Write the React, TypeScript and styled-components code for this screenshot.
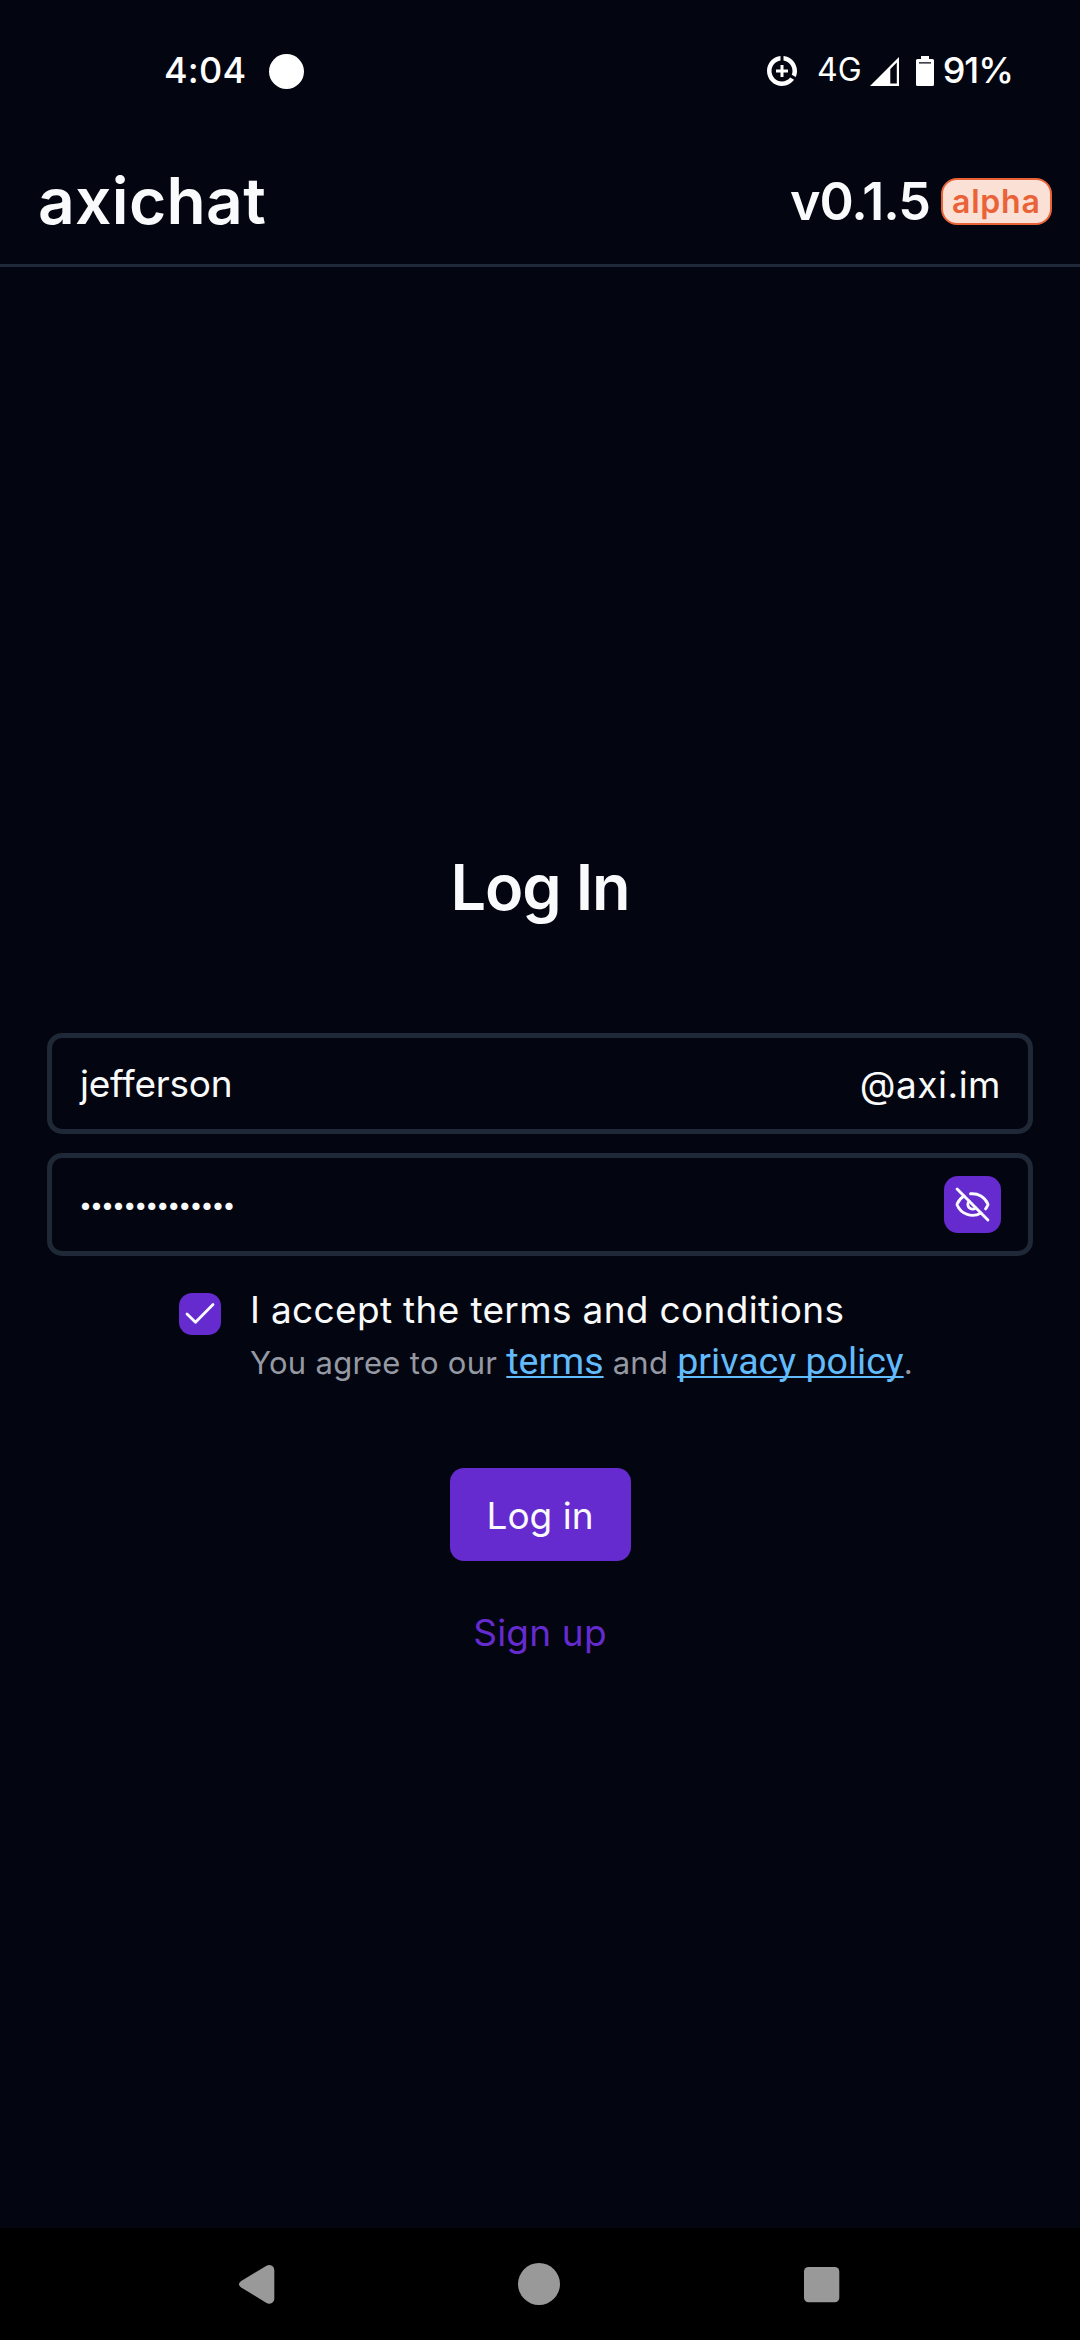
import React from 'react';
import styled, { createGlobalStyle } from 'styled-components';
import { EyeOff } from 'lucide-react';

const color = {
  background: '#030510',
  foreground: '#f9fafb',
  primary: '#652bcf',
  border: '#1f2836',
  muted: '#9599a3',
  link: '#62bbfb',
  alpha: '#ea6237',
  alphaFill: '#fbe0d6',
  nav: '#999999',
};

const GlobalStyle = createGlobalStyle`
  * { box-sizing: border-box; }
  body {
    margin: 0;
    background: ${color.background};
    color: ${color.foreground};
    font-family: Inter, Roboto, sans-serif;
  }
`;

const Screen = styled.div`
  display: flex;
  flex-direction: column;
  width: 1080px;
  height: 2340px;
  background: ${color.background};
`;

const StatusBar = styled.div`
  display: flex;
  justify-content: space-between;
  align-items: center;
  height: 139px;
  padding: 0 67px 0 164px;
  color: #fff;
`;

const StatusGroup = styled.div`
  display: flex;
  align-items: center;

  svg {
    display: block;
    margin-top: 3px;
  }
`;

const Text = styled.span<{ $size: number; $weight?: number; $spacing?: number }>`
  font-size: ${(p) => p.$size}px;
  font-weight: ${(p) => p.$weight ?? 400};
  letter-spacing: ${(p) => p.$spacing ?? 0}px;
  line-height: 44px;
  white-space: nowrap;
`;

const CameraDot = styled.span`
  width: 35px;
  height: 35px;
  margin: 4px 0 0 23px;
  border-radius: 50%;
  background: #fff;
`;

const NetworkLabel = styled(Text)`
  margin: 1px 8px 0 17px;
`;

const Battery = styled.span`
  display: block;
  margin: 0 9px 0 17px;
`;

const AppBar = styled.header`
  display: flex;
  justify-content: space-between;
  align-items: center;
  height: 128px;
  padding: 0 28px 0 38px;
  border-bottom: 3px solid ${color.border};
`;

const Brand = styled(Text)`
  margin-bottom: 2px;
`;

const Version = styled.div`
  display: flex;
  align-items: center;
  gap: 11px;
`;

const Badge = styled.span`
  display: flex;
  align-items: center;
  width: 111px;
  height: 47px;
  padding-left: 9px;
  border: 2px solid ${color.alpha};
  border-radius: 16px;
  background: ${color.alphaFill};
  color: ${color.alpha};
`;

const Main = styled.main`
  flex: 1;
  display: flex;
  flex-direction: column;
  align-items: center;
  padding: 582px 47px 0;
`;

const Title = styled.h1`
  margin: 0 0 108px;
  font-size: 63px;
  font-weight: 600;
  line-height: 76px;
  letter-spacing: -1px;
`;

const Field = styled.div<{ $height: number }>`
  display: flex;
  justify-content: space-between;
  align-items: center;
  width: 986px;
  height: ${(p) => p.$height}px;
  margin-bottom: 19px;
  padding: 0 27px 0 28px;
  border: 5px solid ${color.border};
  border-radius: 15px;
`;

const Domain = styled(Text)`
  margin-top: 2px;
`;

const Password = styled(Text)`
  margin-left: -1px;
`;

const EyeButton = styled.button`
  display: flex;
  align-items: center;
  justify-content: center;
  width: 57px;
  height: 57px;
  padding: 0;
  border: 0;
  border-radius: 14px;
  background: ${color.primary};
  color: ${color.foreground};
`;

const Consent = styled.div`
  display: flex;
  align-self: flex-start;
  gap: 29px;
  margin: 12px 0 0 132px;
`;

const Checkbox = styled.span`
  width: 42px;
  height: 42px;
  margin-top: 6px;
  border-radius: 13px;
  background: ${color.primary};

  svg {
    display: block;
  }
`;

const ConsentText = styled.div`
  display: flex;
  flex-direction: column;
  padding-top: 1px;
`;

const Legal = styled.p`
  margin: 7px 0 0;
  color: ${color.muted};
  font-size: 31px;
  line-height: 48px;
  letter-spacing: 0.3px;
  white-space: nowrap;
`;

const Link = styled.a`
  color: ${color.link};
  font-family: Roboto, sans-serif;
  font-size: 37.6px;
  line-height: 1;
  letter-spacing: 0;
  text-decoration: underline;
  text-decoration-thickness: 2px;
  text-underline-offset: 2px;
  text-decoration-skip-ink: none;
`;

const LoginButton = styled.button`
  display: flex;
  align-items: center;
  justify-content: center;
  width: 181px;
  height: 93px;
  margin-top: 81px;
  padding: 3px 0 0;
  border: 0;
  border-radius: 14px;
  background: ${color.primary};
  color: ${color.foreground};
  font-family: inherit;
`;

const SignUp = styled.a`
  margin-top: 50px;
  color: ${color.primary};
  font-size: 37px;
  line-height: 44px;
  letter-spacing: 0.2px;
`;

const NavBar = styled.nav`
  display: flex;
  align-items: center;
  gap: 222px;
  height: 112px;
  padding-left: 227px;
  background: #000;
  color: ${color.nav};
`;

export default function App() {
  return (
    <>
      <GlobalStyle />
      <Screen>
        <StatusBar>
          <StatusGroup>
            <Text $size={36} $weight={500} $spacing={0.2}>4:04</Text>
            <CameraDot />
          </StatusGroup>
          <StatusGroup>
            <svg width="36" height="36" viewBox="0 0 24 24" fill="currentColor">
              <path d="M11 8v3H8v2h3v3h2v-3h3v-2h-3V8h-2zm2-5.95v3.03c3.39.49 6 3.39 6 6.92 0 .9-.18 1.75-.48 2.54l2.6 1.53c.56-1.24.88-2.62.88-4.07 0-5.18-3.95-9.45-9-9.95zM12 19c-3.87 0-7-3.13-7-7 0-3.53 2.61-6.43 6-6.92V2.05c-5.06.5-9 4.76-9 9.95 0 5.52 4.47 10 9.99 10 3.31 0 6.24-1.61 8.06-4.09l-2.6-1.53C16.17 17.98 14.21 19 12 19z" />
            </svg>
            <NetworkLabel $size={32}>4G</NetworkLabel>
            <svg width="29" height="29" viewBox="0 0 29 29" fill="currentColor" fillRule="evenodd">
              <path d="M0 29L29 0V29ZM20.3 12L26.8 5.5V26.5H20.3Z" />
            </svg>
            <Battery>
              <svg width="18" height="30" viewBox="0 0 18 30" fill="currentColor" fillRule="evenodd">
                <path d="M5 0H13V3H16.5Q18 3 18 4.500V28.500Q18 30 16.500 30H1.500Q0 30 0 28.500V4.500Q0 3 1.500 3H5ZM3 6.200V7.600H15V6.200Z" />
              </svg>
            </Battery>
            <Text $size={36} $weight={500} $spacing={-1}>91%</Text>
          </StatusGroup>
        </StatusBar>

        <AppBar>
          <Brand $size={64} $weight={600} $spacing={0.35}>axichat</Brand>
          <Version>
            <Text $size={52} $weight={600} $spacing={-1}>v0.1.5</Text>
            <Badge>
              <Text $size={32} $weight={600} $spacing={0.8}>alpha</Text>
            </Badge>
          </Version>
        </AppBar>

        <Main>
          <Title>Log In</Title>
          <Field $height={101}>
            <Text $size={37} $spacing={-0.24}>jefferson</Text>
            <Domain $size={37} $spacing={0.5}>@axi.im</Domain>
          </Field>
          <Field $height={103}>
            <Password $size={23} $spacing={-1.9}>••••••••••••••</Password>
            <EyeButton aria-label="Show password">
              <EyeOff size={37} strokeWidth={1.9} />
            </EyeButton>
          </Field>

          <Consent>
            <Checkbox>
              <svg width="42" height="42" viewBox="0 0 42 42" fill="none" stroke={color.foreground} strokeWidth="2.8" strokeLinecap="round" strokeLinejoin="round">
                <path d="M8 21L16.500 29.300L34 11.500" />
              </svg>
            </Checkbox>
            <ConsentText>
              <Text $size={37} $spacing={0.33}>I accept the terms and conditions</Text>
              <Legal>
                You agree to our <Link>terms</Link> and <Link>privacy policy</Link>.
              </Legal>
            </ConsentText>
          </Consent>

          <LoginButton>
            <Text $size={37}>Log in</Text>
          </LoginButton>
          <SignUp>Sign up</SignUp>
        </Main>

        <NavBar>
          <svg width="60" height="60" viewBox="0 0 60 60" fill="currentColor">
            <path d="M14.200 27L39.500 11.700Q42 10.300 45 11.700Q47.300 13 47.300 16V45Q47.300 47.500 45 49Q42 50.500 39.500 49L14.200 33.500Q12 32 12 30.300Q12 28.500 14.200 27Z" />
          </svg>
          <svg width="60" height="60" viewBox="0 0 60 60" fill="currentColor">
            <circle cx="30" cy="30" r="21" />
          </svg>
          <svg width="60" height="60" viewBox="0 0 60 60" fill="currentColor">
            <rect x="13" y="13" width="35.300" height="35.300" rx="4.500" />
          </svg>
        </NavBar>
      </Screen>
    </>
  );
}
